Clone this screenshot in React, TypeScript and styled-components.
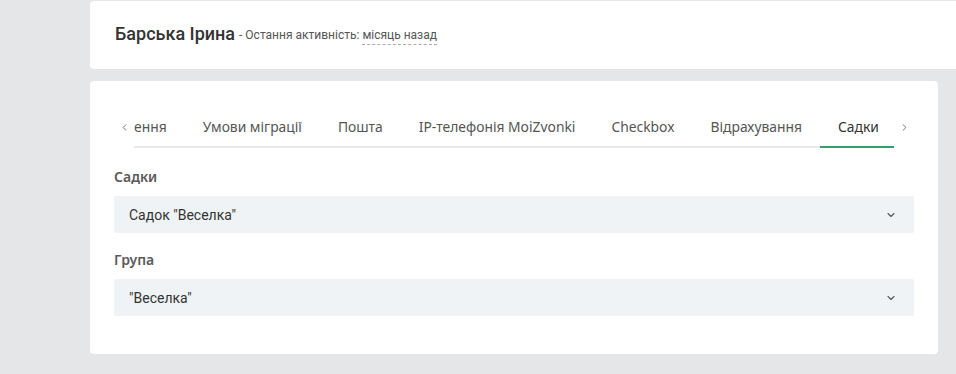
import styled, { createGlobalStyle } from "styled-components";
import { ChevronLeft, ChevronRight, ChevronDown } from "lucide-react";

const GlobalStyle = createGlobalStyle`
  html, body {
    margin: 0;
    padding: 0;
    background: #e5e6e7;
  }
  * { box-sizing: border-box; }
`;

const Page = styled.div`
  padding: 1px 0 0 90px;
  display: flex;
  flex-direction: column;
  gap: 12px;
  min-height: 374px;
  font-family: Roboto, "Liberation Sans", sans-serif;
`;

const HeaderCard = styled.div`
  background: #fff;
  border-radius: 4px 0 0 4px;
  height: 68px;
  padding: 0 25px 4px;
  display: flex;
  align-items: center;
  gap: 4px;
`;

const Name = styled.h1`
  margin: 0;
  font-size: 18px;
  font-weight: 500;
  color: #333;
`;

const Activity = styled.span`
  font-size: 12px;
  color: #555;
  padding-top: 4px;
`;

const Dashed = styled.span`
  border-bottom: 1px dashed #aaa;
  padding-bottom: 2px;
`;

const Card = styled.div`
  background: #fff;
  border-radius: 4px;
  margin-right: 18px;
  padding: 24px 24px 38px;
`;

const TabsNav = styled.div`
  display: flex;
  align-items: stretch;
`;

const Arrow = styled.div`
  width: 20px;
  display: flex;
  align-items: center;
  justify-content: center;
  color: #666;
  padding-top: 1px;
`;

const TabList = styled.div`
  flex: 1;
  display: flex;
  overflow: hidden;
  box-shadow: inset 0 -2px 0 #e8e9ea;
`;

const Tab = styled.div<{ $active?: boolean; $clipped?: boolean }>`
  padding: 12px 18px 9px;
  padding-left: ${(p) => (p.$clipped ? "0" : "18px")};
  line-height: 20px;
  font-family: "Noto Sans", "Liberation Sans", sans-serif;
  font-size: 13.85px;
  white-space: nowrap;
  color: ${(p) => (p.$active ? "#333" : "#555")};
  border-bottom: 2px solid ${(p) => (p.$active ? "#3a9d68" : "transparent")};
`;

const Field = styled.div`
  margin-top: 19px;
  & + & {
    margin-top: 17px;
  }
`;

const Label = styled.div`
  font-family: "Noto Sans", "Liberation Sans", sans-serif;
  font-size: 14px;
  font-weight: 600;
  line-height: 20px;
  color: #5a5a5a;
  margin-bottom: 9px;
`;

const Select = styled.div`
  height: 37px;
  background: #f0f3f6;
  border-radius: 2px;
  display: flex;
  align-items: center;
  justify-content: space-between;
  padding: 0 17px 0 15px;
  font-size: 14px;
  color: #333;
`;

const tabs = [
  "ення",
  "Умови міграції",
  "Пошта",
  "IP-телефонія MoiZvonki",
  "Checkbox",
  "Відрахування",
  "Садки",
];

const fields = [
  { label: "Садки", value: 'Садок "Веселка"' },
  { label: "Група", value: '"Веселка"' },
];

export default function App() {
  return (
    <>
      <GlobalStyle />
      <Page>
        <HeaderCard>
          <Name>Барська Ірина</Name>
          <Activity>
            - Остання активність: <Dashed>місяць назад</Dashed>
          </Activity>
        </HeaderCard>
        <Card>
          <TabsNav>
            <Arrow>
              <ChevronLeft size={11} strokeWidth={2} />
            </Arrow>
            <TabList>
              {tabs.map((t, i) => (
                <Tab key={t} $clipped={i === 0} $active={t === "Садки"}>
                  {t}
                </Tab>
              ))}
            </TabList>
            <Arrow>
              <ChevronRight size={11} strokeWidth={2} />
            </Arrow>
          </TabsNav>
          {fields.map((f) => (
            <Field key={f.label}>
              <Label>{f.label}</Label>
              <Select>
                <span>{f.value}</span>
                <ChevronDown size={12} strokeWidth={2.2} color="#555" />
              </Select>
            </Field>
          ))}
        </Card>
      </Page>
    </>
  );
}
